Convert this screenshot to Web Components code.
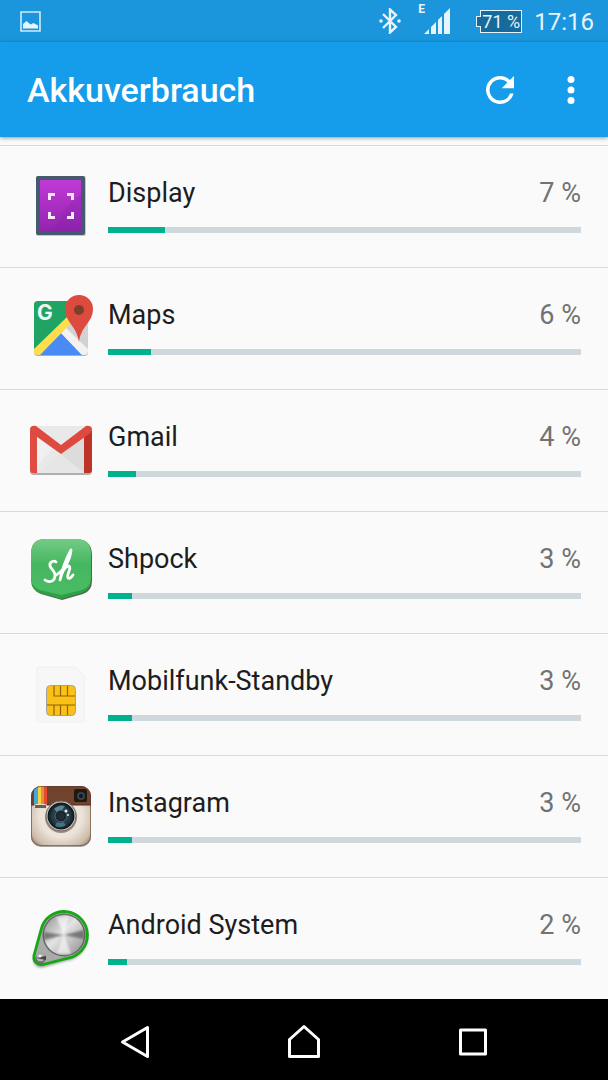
<!DOCTYPE html>
<html lang="de">
<head>
<meta charset="utf-8">
<meta name="viewport" content="width=device-width, initial-scale=1">
<title>Akkuverbrauch</title>
<style>
  body { margin: 0; background: #fafafa; font-family: Roboto, "Noto Sans", sans-serif; }
</style>
</head>
<body>
<battery-screen>
  <status-bar slot="status" time="17:16" battery="71 %" network="E"></status-bar>
  <app-bar slot="bar">Akkuverbrauch</app-bar>

  <usage-row name="Display" percent="7 %" level="12">
    <svg viewBox="0 0 72 72" aria-hidden="true">
      <defs><linearGradient id="disp" x1="0" y1="0" x2="0" y2="1"><stop offset="0" stop-color="#c03ad6"/><stop offset="1" stop-color="#9223ae"/></linearGradient></defs>
      <rect x="11" y="6" width="50" height="60" rx="2" fill="#000" opacity=".2"/>
      <rect x="11" y="6" width="49" height="59" rx="2" fill="#455a6c"/>
      <rect x="15" y="10" width="41" height="52" fill="url(#disp)"/>
      <path d="M56 24C50 30 40 36 37 46c-2 7-8 9-13 16h32z" fill="#7b1fa2" opacity=".25"/>
      <path d="M24.500 30v-5.500H30M42 24.500h5.500V30M24.500 42v5.500H30M42 47.500h5.500V42" fill="none" stroke="#f3eaf5" stroke-width="3"/>
    </svg>
  </usage-row>

  <usage-row name="Maps" percent="6 %" level="9">
    <svg viewBox="0 0 72 72" aria-hidden="true">
      <defs><clipPath id="mapclip"><rect x="9" y="9" width="54" height="54" rx="4"/></clipPath></defs>
      <rect x="9" y="10" width="54" height="54" rx="4" fill="#000" opacity=".3"/>
      <g clip-path="url(#mapclip)">
        <rect x="9" y="9" width="54" height="54" fill="#d2d2d2"/>
        <path d="M9 9h50L9 59z" fill="#1fa463"/>
        <path d="M36 41L14 63h43z" fill="#4a8af4"/>
        <path d="M36 41l5-5 22 21v6h-6z" fill="#f2f2f2"/>
        <path d="M9 57l33-32 5 5-32 33H9z" fill="#ffdd4b"/>
      </g>
      <text x="12" y="28" font-family="Inter, Roboto, sans-serif" font-size="21" font-weight="700" fill="#f1f8f4">G</text>
      <path d="M54 3a14 14 0 0 0-14 14c0 13 12 17 14 33 2-16 14-20 14-33A14 14 0 0 0 54 3z" fill="#dc4b3e"/>
      <circle cx="54" cy="18" r="5" fill="#7c3f2c"/>
    </svg>
  </usage-row>

  <usage-row name="Gmail" percent="4 %" level="6">
    <svg viewBox="0 0 72 72" aria-hidden="true">
      <rect x="5" y="14" width="62" height="47" rx="4" fill="#000" opacity=".3"/>
      <rect x="5" y="12" width="62" height="47" rx="4" fill="#e9e9e9"/>
      <path d="M12 59l24-19 23 19z" fill="#e6e6e6"/>
      <path d="M12 21l16 13-16 18z" fill="#f0f0f0"/>
      <path d="M36 40l23-19v38z" fill="#dcdcdc"/>
      <path d="M12 22v37H8q-3 0-3-3V16z" fill="#e04c40"/>
      <path d="M59 22v37h5q3 0 3-3V16z" fill="#bd3328"/>
      <path d="M5 15c0-3 4-4 6-3l25 19 25-19c2-1 6 0 6 3 0 2-1 4-3 5L36 40 8 20c-2-1-3-3-3-5z" fill="#de4a3f"/>
    </svg>
  </usage-row>

  <usage-row name="Shpock" percent="3 %" level="5">
    <svg viewBox="0 0 72 72" aria-hidden="true">
      <defs><linearGradient id="shp" x1="0" y1="0" x2="0" y2="1"><stop offset="0" stop-color="#74cb86"/><stop offset=".45" stop-color="#45b760"/><stop offset="1" stop-color="#49bc63"/></linearGradient></defs>
      <path d="M20 4h32q15 0 15 15v26q0 10-9 13L37 64 16 58q-9-3-9-13V19Q7 4 20 4z" fill="#54635a"/>
      <path d="M20 3h31q15 0 15 15v26q0 10-9 13l-21 6-21-6q-9-3-9-13V18Q6 3 20 3z" fill="#2fa043"/>
      <path d="M20 3h31q15 0 15 15v23q0 10-9 13l-21 5-21-5q-9-3-9-13V18Q6 3 20 3z" fill="url(#shp)"/>
      <path d="M31 26c-2-2-7 0-6 4 1 3 5 5 5 9 0 7-6 8-10 5M31 39c8-4 14-15 15-25-5 9-9 20-11 30 2-8 5-14 9-14 3 1-3 10-1 12 1 1 3 0 5-3" fill="none" stroke="#fff" stroke-width="2.800" stroke-linecap="round" stroke-linejoin="round"/>
    </svg>
  </usage-row>

  <usage-row name="Mobilfunk-Standby" percent="3 %" level="5">
    <svg viewBox="0 0 72 72" aria-hidden="true">
      <path d="M13 9h37l9 9v45q0 1-1 1H13q-1 0-1-1V10q0-1 1-1z" fill="#f7f7f7" stroke="#eee"/>
      <rect x="21.500" y="27.500" width="29" height="30" rx="4" fill="#fbc116" stroke="#9fa0a8"/>
      <path d="M29 28v10h21M35.500 28v10M42.500 28v10M22 47h28M29 47v10M35.500 47v10M42.500 47v10" fill="none" stroke="#8e6408" stroke-width="1.200"/>
    </svg>
  </usage-row>

  <usage-row name="Instagram" percent="3 %" level="5">
    <svg viewBox="0 0 72 72" aria-hidden="true">
      <defs>
        <clipPath id="igclip"><rect x="6" y="6" width="60" height="60" rx="10"/></clipPath>
        <radialGradient id="igbody" cx=".5" cy=".5" r=".7"><stop offset=".5" stop-color="#ece4da"/><stop offset=".8" stop-color="#cdbbab"/><stop offset="1" stop-color="#805d49"/></radialGradient>
        <radialGradient id="iglens"><stop offset="0" stop-color="#334650"/><stop offset=".3" stop-color="#15242c"/><stop offset=".6" stop-color="#26434f"/><stop offset="1" stop-color="#0d1418"/></radialGradient>
      </defs>
      <rect x="6" y="7" width="60" height="60" rx="10" fill="#000" opacity=".35"/>
      <g clip-path="url(#igclip)">
        <rect x="6" y="6" width="60" height="60" fill="url(#igbody)"/>
        <rect x="6" y="6" width="60" height="19" fill="#70432d"/>
        <path d="M9 6h4v19H9z" fill="#45a7dd"/><path d="M13 6h3v19h-3z" fill="#f5d33c"/><path d="M16 6h3v19h-3z" fill="#ee8b35"/><path d="M19 6h3v19h-3z" fill="#e34a32"/>
        <path d="M6 25h60" stroke="#4f3123"/>
      </g>
      <rect x="6.500" y="6.500" width="59" height="59" rx="9.500" fill="none" stroke="#5c3c2c" opacity=".6"/>
      <rect x="9.500" y="24.500" width="12" height="4" rx="1" fill="#6d5d51" stroke="#e8ded2"/>
      <rect x="49" y="9" width="13" height="13" rx="2" fill="#211713"/>
      <circle cx="56" cy="16" r="4" fill="#38434b"/><circle cx="56" cy="16" r="2" fill="#10181c"/>
      <circle cx="36" cy="37" r="16" fill="#5f5045" opacity=".6"/>
      <circle cx="36" cy="36" r="15" fill="#d9d4cd" stroke="#77695e"/>
      <circle cx="36" cy="36" r="13.500" fill="url(#iglens)"/>
      <circle cx="36" cy="36" r="6" fill="none" stroke="#65767d" stroke-width=".8"/>
      <circle cx="36" cy="36" r="3" fill="#202d35"/>
      <path d="M29 29q5-5 11-3l-3 4q-3-1-5 2z" fill="#75a9b5" opacity=".7"/>
      <path d="M30 46q6 3 11-1l-3-3q-3 2-6 0z" fill="#5e94a6" opacity=".6"/>
      <circle cx="41" cy="31" r="1.500" fill="#e0f0ef"/><circle cx="43" cy="35" r="1" fill="#e0f0ef"/>
    </svg>
  </usage-row>

  <usage-row name="Android System" percent="2 %" level="4">
    <svg viewBox="0 0 72 72" aria-hidden="true">
      <defs>
        <linearGradient id="steel" x1="0" y1="0" x2="1" y2="1"><stop offset="0" stop-color="#8c8c8c"/><stop offset=".45" stop-color="#e4e4e4"/><stop offset="1" stop-color="#8c8c8c"/></linearGradient>
        <filter id="soft" x="-20%" y="-20%" width="140%" height="140%"><feGaussianBlur stdDeviation="1.500"/></filter>
        <filter id="blend" x="-20%" y="-20%" width="140%" height="140%"><feGaussianBlur stdDeviation="1.200"/></filter>
      </defs>
      <path d="M16 30A23.500 23.500 0 1 1 42 58.300L18 65c-6 1-10-3-9-9z" fill="#555" opacity=".7" filter="url(#soft)"/>
      <path d="M16 28A23.500 23.500 0 1 1 42 56.300L18 62.500c-6 1-10-3-9-9z" fill="#aaa" stroke="#14a914" stroke-width="2.800"/>
      <circle cx="39" cy="33" r="21.500" fill="#666"/>
      <circle cx="39" cy="33" r="20" fill="url(#steel)"/>
      <g filter="url(#blend)">
        <path d="M39 33L19 30v8zM39 33l20-5v9z" fill="#444" opacity=".6"/>
        <path d="M39 33L31 15l13-1zM39 33l-7 18 14 1z" fill="#fff" opacity=".6"/>
      </g>
      <circle cx="15.500" cy="56.500" r="5" fill="#666"/><circle cx="15.500" cy="55.500" r="4" fill="#b5b5b5"/><path d="M11 56l10-2v4z" fill="#444"/><circle cx="15" cy="54" r="1.500" fill="#eee"/>
    </svg>
  </usage-row>

  <nav-bar slot="nav"></nav-bar>
</battery-screen>

<script>
class Base extends HTMLElement {
  connectedCallback() {
    if (!this.shadowRoot) this.attachShadow({ mode: "open" }).innerHTML = this.render();
  }
  attr(name) { return this.getAttribute(name) || ""; }
}

customElements.define("battery-screen", class extends Base {
  render() {
    return `<style>
      :host { display: flex; flex-direction: column; min-height: 100vh; }
      main { flex: 1; padding-top: 8px; background: #fafafa; }
    </style>
    <slot name="status"></slot><slot name="bar"></slot>
    <main><slot></slot></main>
    <slot name="nav"></slot>`;
  }
});

customElements.define("status-bar", class extends Base {
  render() {
    return `<style>
      :host { display: flex; align-items: center; height: 42px; padding: 0 14px 0 20px; background: #1b96dc; color: #e8f4fc; }
      svg { display: block; }
      .photo { margin-right: auto; }
      .signal { position: relative; margin: 0 30px 0 23px; }
      .net { position: absolute; left: -6px; top: -5px; font: 700 12px/12px Roboto, sans-serif; }
      .battery { position: relative; box-sizing: border-box; width: 42px; height: 23px; border: 1px solid #e8f4fc; background: #166a9c; font-size: 18px; line-height: 21px; text-align: center; white-space: nowrap; }
      .battery::before { content: ""; position: absolute; left: -5px; top: 5px; width: 4px; height: 9px; border: 1px solid #e8f4fc; border-right: 0; background: #166a9c; }
      time { margin-left: 12px; font-size: 24px; line-height: 28px; padding-top: 2px; }
    </style>
    <svg class="photo" width="21" height="21" viewBox="0 0 21 21" aria-hidden="true"><path d="M1 1h19v19H1z" fill="none" stroke="#d3eafa" stroke-width="1.600"/><path d="M3 17.500V13l3.500-3 4 3.500 3-1.500 4.500 2.500v3z" fill="#e8f4fc"/></svg>
    <svg width="22" height="26" viewBox="0 0 22 26" aria-hidden="true"><path d="M4 6l13 13-6 5.500v-23L17 7 4 20" fill="none" stroke="#e8f4fc" stroke-width="2.400"/><circle cx="2" cy="13" r="1.800" fill="#e8f4fc"/><circle cx="20" cy="13" r="1.800" fill="#e8f4fc"/></svg>
    <div class="signal"><svg width="26" height="26" viewBox="0 0 26 26" aria-hidden="true"><path d="M0 26l5-5v5zM7 26v-7l5-5v12zM14 26V12l4-4v18zM20 26V6l6-6v26z" fill="#e8f4fc"/></svg><span class="net">${this.attr("network")}</span></div>
    <div class="battery">${this.attr("battery")}</div>
    <time>${this.attr("time")}</time>`;
  }
});

customElements.define("app-bar", class extends Base {
  render() {
    return `<style>
      :host { display: flex; align-items: center; height: 95px; padding: 0 16px 0 27px; position: relative; background: #159ceb; color: #fff; box-shadow: 0 1px 4px rgba(0,0,0,.4); }
      h1 { flex: 1; margin: 0; font-size: 34px; line-height: 40px; font-weight: 500; }
      button { display: block; border: 0; padding: 0; background: none; color: inherit; }
      button + button { margin-left: 29px; }
      svg { display: block; width: 42px; height: 42px; fill: currentColor; }
    </style>
    <h1><slot></slot></h1>
    <button type="button" aria-label="Aktualisieren"><svg viewBox="0 0 24 24"><path d="M17.650 6.350A7.958 7.958 0 0 0 12 4a8 8 0 1 0 7.730 10h-2.080A5.990 5.990 0 0 1 12 18a6 6 0 1 1 0-12c1.660 0 3.140.690 4.220 1.780L13 11h7V4z"/></svg></button>
    <button type="button" aria-label="Weitere Optionen"><svg viewBox="0 0 24 24"><circle cx="12" cy="6" r="2"/><circle cx="12" cy="12" r="2"/><circle cx="12" cy="18" r="2"/></svg></button>`;
  }
});

customElements.define("usage-row", class extends Base {
  render() {
    return `<style>
      :host { display: grid; grid-template-columns: 72px 1fr; column-gap: 11px; box-sizing: border-box; height: 122px; padding: 24px 27px 0 25px; border-top: 1px solid #d9d9d9; }
      ::slotted(svg) { display: block; width: 72px; height: 72px; }
      .line { display: flex; justify-content: space-between; font-size: 27px; line-height: 32px; padding-top: 7px; }
      label { color: #1d1d1d; }
      .pct { color: #727272; }
      progress { display: block; appearance: none; width: 100%; height: 6px; margin-top: 18px; border: 0; background: #cfd8dc; }
      progress::-webkit-progress-bar { background: #cfd8dc; }
      progress::-webkit-progress-value { background: #00b18f; }
      progress::-moz-progress-bar { background: #00b18f; }
    </style>
    <slot></slot>
    <div>
      <div class="line"><label for="use">${this.attr("name")}</label><span class="pct">${this.attr("percent")}</span></div>
      <progress id="use" max="100" value="${this.attr("level")}"></progress>
    </div>`;
  }
});

customElements.define("nav-bar", class extends Base {
  render() {
    return `<style>
      :host { display: block; background: #000; }
      nav { display: flex; height: 81px; padding: 0 50px; }
      button { flex: 1; display: flex; align-items: center; justify-content: center; border: 0; padding: 4px 0 0; background: none; }
      svg { width: 36px; height: 36px; fill: none; stroke: #fff; stroke-width: 3; stroke-linejoin: round; }
    </style>
    <nav>
      <button type="button" aria-label="Zurück"><svg viewBox="0 0 36 36"><path d="M5.500 18L30.500 3.500v29z"/></svg></button>
      <button type="button" aria-label="Startbildschirm"><svg viewBox="0 0 36 36"><path d="M18 2.500l14.500 13v17h-29v-17z"/></svg></button>
      <button type="button" aria-label="Letzte Apps"><svg viewBox="0 0 36 36"><path d="M5.500 6h25v24h-25z"/></svg></button>
    </nav>`;
  }
});
</script>
</body>
</html>
